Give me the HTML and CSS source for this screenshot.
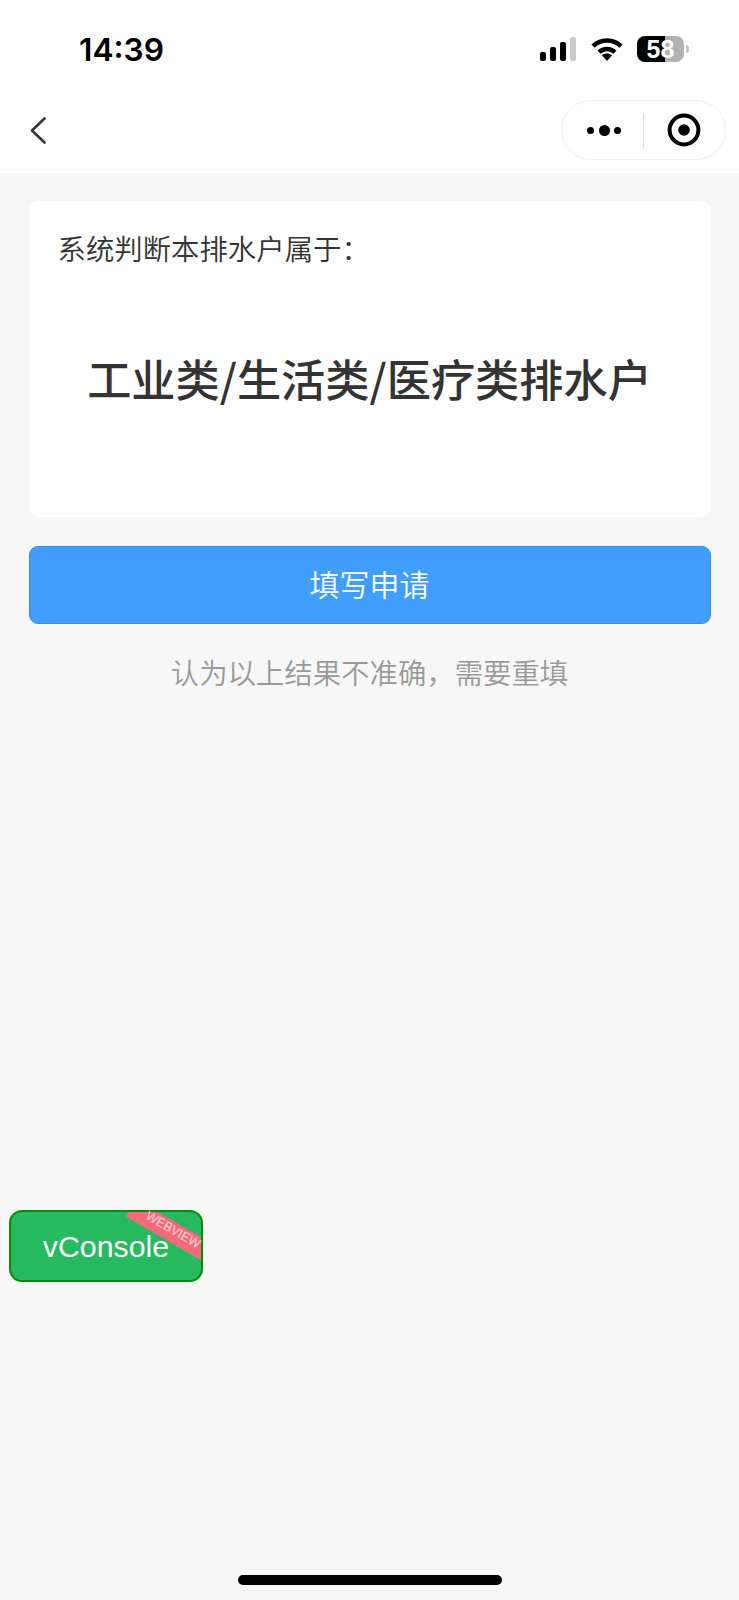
FILE: index.html
```html
<!DOCTYPE html>
<html lang="zh-CN">
<head>
<meta charset="utf-8">
<title>排水户</title>
<link rel="stylesheet" href="styles.css">
</head>
<body>
<header class="top">
  <div class="status">
    <span class="time">14:39</span>
    <div class="status-icons">
      <div class="signal">
        <i class="bar b1"></i><i class="bar b2"></i><i class="bar b3"></i><i class="bar b4"></i>
      </div>
      <svg class="wifi" viewBox="0 0 32 24" width="32" height="24">
        <path d="M2 9.2C10 1.6 22 1.6 30 9.2" fill="none" stroke="#000" stroke-width="4.6"/>
        <path d="M8 15.2C12.6 11 19.4 11 24 15.2" fill="none" stroke="#000" stroke-width="4.4"/>
        <path d="M10.8 18.2C14 15.8 18 15.8 21.2 18.2L16 24Z" fill="#000"/>
      </svg>
      <div class="battery">
        <div class="cell"><span class="level">58</span></div>
        <i class="nub"></i>
      </div>
    </div>
  </div>
  <div class="nav">
    <svg class="back" viewBox="0 0 16 27" width="16" height="27">
      <path d="M14.5 1.5L2 13.5L14.5 25.5" fill="none" stroke="#333" stroke-width="2.6" stroke-linecap="round" stroke-linejoin="round"/>
    </svg>
    <div class="capsule">
      <div class="more"><i class="dot"></i><i class="dot big"></i><i class="dot"></i></div>
      <i class="divider"></i>
      <svg class="target" viewBox="0 0 34 34" width="34" height="34">
        <circle cx="17" cy="17" r="14.4" fill="none" stroke="#000" stroke-width="4"/>
        <circle cx="17" cy="17" r="5.8" fill="#000"/>
      </svg>
    </div>
  </div>
</header>
<main class="content">
  <section class="card">
    <p class="label">系统判断本排水户属于：</p>
    <h1 class="result">工业类/生活类/医疗类排水户</h1>
  </section>
  <button class="primary" type="button">填写申请</button>
  <a class="redo">认为以上结果不准确，需要重填</a>
</main>
<div class="home"></div>
<div class="vconsole">
  vConsole
  <div class="ribbon-clip"><i class="ribbon"></i></div>
  <span class="ribbon-text">WEBVIEW</span>
</div>
</body>
</html>
```
FILE: styles.css
```css
* { box-sizing: border-box; }
html, body { margin: 0; padding: 0; }
body {
  width: 739px;
  height: 1600px;
  background: #f7f7f7;
  display: flex;
  flex-direction: column;
  overflow: hidden;
  font-family: "Noto Sans CJK SC", "Liberation Sans", sans-serif;
  color: #333;
  position: relative;
}
.top { background: #fff; height: 173px; flex: none; }
.status {
  height: 100px;
  display: flex;
  align-items: flex-start;
  justify-content: space-between;
  padding: 32px 50px 0 79px;
}
.time {
  font-family: Inter, "Liberation Sans", sans-serif;
  font-weight: 600;
  font-size: 31.7px;
  line-height: 36px;
  color: #000;
}
.status-icons { display: flex; align-items: flex-start; padding-top: 4px; }
.signal { display: flex; align-items: flex-end; gap: 4px; height: 24px; margin-top: 1px; }
.bar { display: block; width: 6px; border-radius: 2px; background: #000; }
.b1 { height: 9px; }
.b2 { height: 14px; }
.b3 { height: 19px; }
.b4 { height: 24px; background: #c9c9c9; }
.wifi { display: block; margin-left: 15px; margin-top: 1px; }
.battery { display: flex; align-items: center; margin-left: 14px; }
.cell {
  width: 47px;
  height: 26px;
  border-radius: 8px;
  background: linear-gradient(90deg, #000 0 28px, #b2b2b2 28px);
  color: #fff;
  text-align: center;
}
.level {
  display: block;
  font-family: "Liberation Sans", sans-serif;
  font-weight: 700;
  font-size: 25px;
  line-height: 26px;
}
.nub { display: block; width: 3px; height: 8px; margin-left: 2px; border-radius: 0 3px 3px 0; background: #c4c4c4; }
.nav {
  display: flex;
  align-items: flex-start;
  justify-content: space-between;
  padding: 0 13px 0 30px;
}
.back { display: block; margin-top: 17px; }
.capsule {
  width: 165px;
  height: 60px;
  border: 1px solid #efefef;
  border-radius: 30px;
  display: flex;
  align-items: center;
  padding-left: 25px;
}
.more { display: flex; align-items: center; gap: 4.5px; }
.dot { display: block; width: 7px; height: 7px; border-radius: 50%; background: #000; }
.dot.big { width: 11px; height: 11px; }
.divider { display: block; width: 1px; height: 35px; background: #dcdcdc; margin-left: 22px; }
.target { display: block; margin-left: 23px; }
.content {
  flex: none;
  padding: 28px 28.5px 0;
  display: flex;
  flex-direction: column;
  align-items: stretch;
}
.card {
  height: 316px;
  background: #fff;
  border-radius: 9px;
  padding: 27px 29px 0;
}
.label {
  margin: 0;
  font-size: 28.4px;
  line-height: 40px;
  font-weight: 350;
  color: #333;
}
.result {
  margin: 79px 0 0;
  font-size: 44.2px;
  line-height: 62px;
  font-weight: 500;
  text-align: center;
  color: #333;
}
.primary {
  margin-top: 29px;
  height: 78px;
  border: 1px solid #3a8ee6;
  border-radius: 9px;
  background: #409eff;
  color: #fff;
  font-family: inherit;
  font-size: 30px;
  font-weight: 350;
  line-height: 40px;
  padding: 0 0 4px;
}
.redo {
  margin-top: 28px;
  font-size: 28.4px;
  font-weight: 350;
  line-height: 40px;
  text-align: center;
  color: #999;
}
.home {
  margin: auto auto 15px;
  width: 264px;
  height: 10px;
  border-radius: 5px;
  background: #000;
}
.vconsole {
  position: fixed;
  left: 9px;
  top: 1210px;
  width: 194px;
  height: 72px;
  border: 2px solid #0a8a0a;
  border-radius: 13px;
  background: #26b960;
  color: #fff;
  font-family: "Liberation Sans", sans-serif;
  font-size: 30.3px;
  line-height: 70px;
  text-align: center;
}
.ribbon-clip {
  position: absolute;
  inset: 0;
  overflow: hidden;
  border-radius: 11px;
}
.ribbon {
  position: absolute;
  left: 113px;
  top: 10.5px;
  width: 100px;
  height: 20px;
  background: #f36a7b;
  transform: rotate(30deg);
  display: block;
}
.ribbon-text {
  position: absolute;
  left: 127px;
  top: 11px;
  width: 70px;
  color: #ffdde1;
  font-size: 12.5px;
  line-height: 14px;
  text-align: center;
  transform: rotate(30deg);
}
```
